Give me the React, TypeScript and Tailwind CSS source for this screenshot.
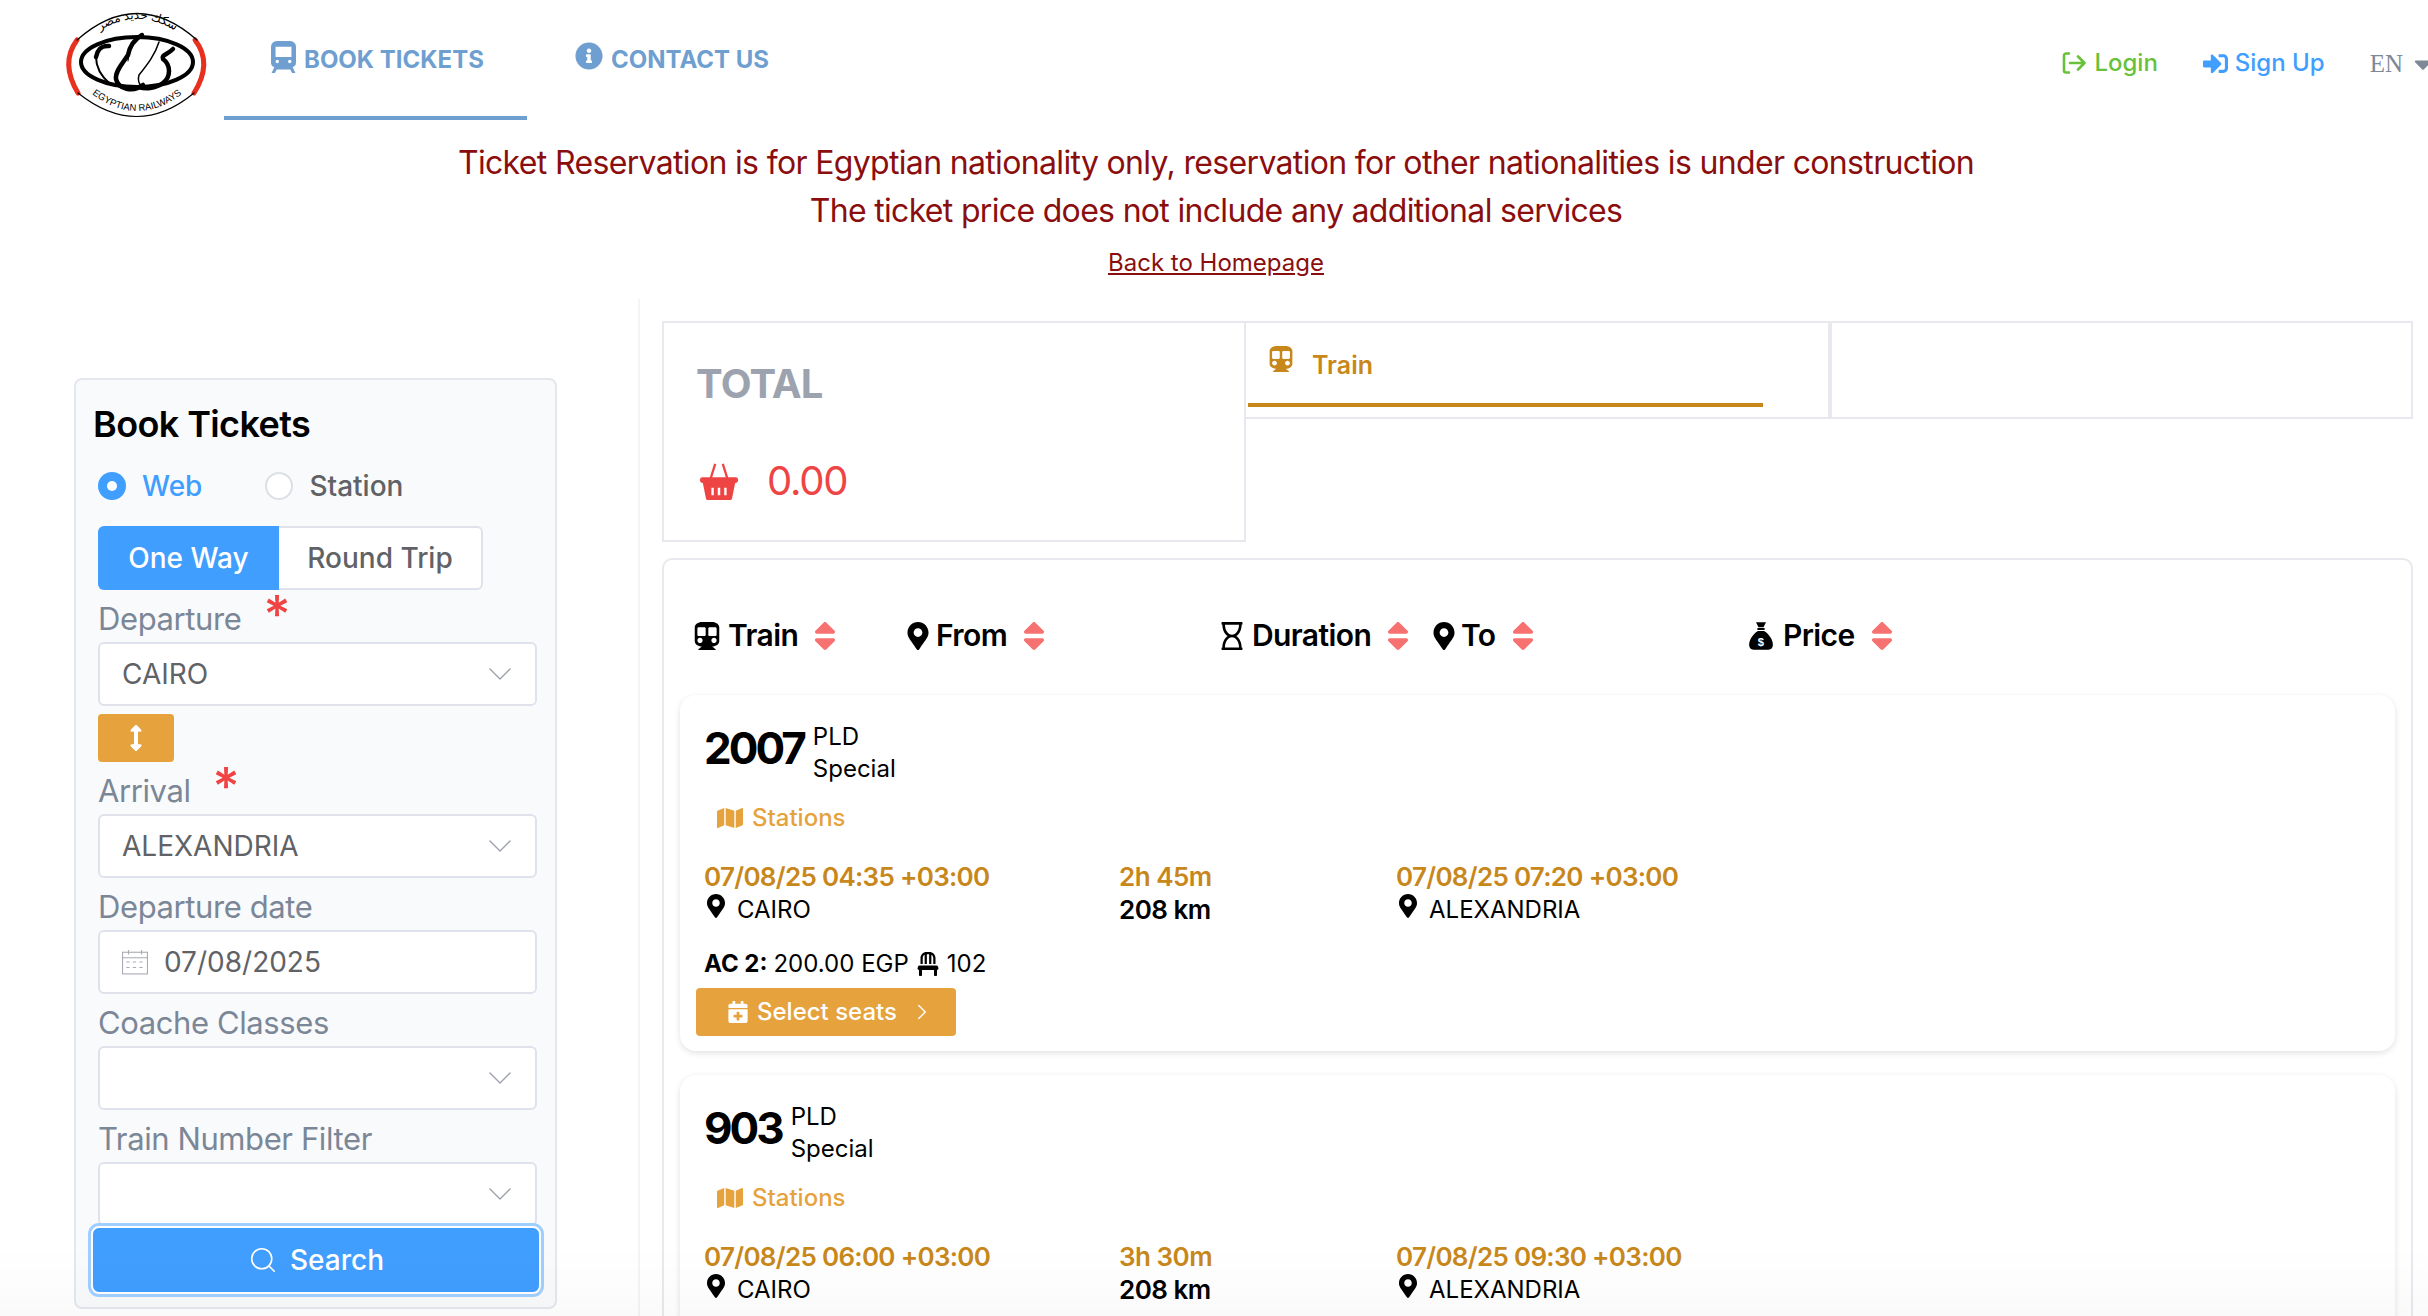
import React from 'react';
import {
  FaCaretDown,
  FaSubway,
  FaInfoCircle,
  FaSignInAlt,
  FaArrowsAltV,
  FaSort,
  FaMapMarkerAlt,
  FaRegHourglass,
  FaMap,
  FaChair,
  FaCalendarPlus,
} from 'react-icons/fa';
import { ChevronDown, ChevronRight, Search } from 'lucide-react';

function Logo() {
  return (
    <svg viewBox="0 0 165 115" className="w-[165px] h-[115px]">
      <defs>
        <path id="logo-top" d="M32 35 Q82 -7 133 35" />
        <path id="logo-bottom" d="M31 84 Q82 128 133 84" />
      </defs>
      <g fill="none" strokeLinecap="round">
        <path d="M22 35 Q5 58 23 88" stroke="#e8301f" strokeWidth="5" />
        <path d="M140 35 Q158 58 139 88" stroke="#e8301f" strokeWidth="5" />
        <path d="M22 35 Q82 -18 142 35" stroke="#000" strokeWidth="1.200" />
        <path d="M23 88 Q82 135 139 88" stroke="#000" strokeWidth="1.200" />
        <ellipse cx="82" cy="57" rx="56" ry="25" stroke="#000" strokeWidth="4" />
        <path d="M54 41 C46 40 42 46 41 52" stroke="#000" strokeWidth="4.500" />
        <path d="M41 52 C41 62 47 72 55 79" stroke="#000" strokeWidth="2" />
        <path d="M87 30 C80 34 75 40 73 50 C68 58 60 66 61 74 C63 84 78 88 88 80" stroke="#000" strokeWidth="4.500" />
        <path d="M74 50 L73 56" stroke="#000" strokeWidth="1" />
        <path d="M104 37 C100 50 92 60 84 70 C82 78 86 82 90 82" stroke="#000" strokeWidth="1.500" />
        <path d="M118 44 C112 50 106 50 108 54 C116 60 116 72 108 78 C100 84 90 84 84 82" stroke="#000" strokeWidth="4.500" />
      </g>
      <text fontSize="12" fontFamily="'Noto Sans', 'DejaVu Sans', sans-serif" fill="#000">
        <textPath href="#logo-top" startOffset="50%" textAnchor="middle">سكك حديد مصر</textPath>
      </text>
      <text fontSize="9.500" fontFamily="'Liberation Sans', sans-serif" fill="#000">
        <textPath href="#logo-bottom" startOffset="50%" textAnchor="middle">EGYPTIAN RAILWAYS</textPath>
      </text>
    </svg>
  );
}

function Basket({ className }: { className?: string }) {
  return (
    <svg viewBox="0 0 40 40" className={className} fill="currentColor">
      <path d="M11 18 L16 2 M29 18 L24 2" stroke="currentColor" strokeWidth="2.400" fill="none" />
      <rect x="0" y="16" width="40" height="6" rx="2.500" />
      <path
        fillRule="evenodd"
        d="M3 22h34l-3 15a3 3 0 0 1-3 3H9a3 3 0 0 1-3-3L3 22zm9 5v8h2.500v-8H12zm6.700 0v8h2.600v-8h-2.600zm6.800 0v8H28v-8h-2.500z"
      />
    </svg>
  );
}

function MoneyBag({ className }: { className?: string }) {
  return (
    <svg viewBox="0 0 24 24" className={className} fill="currentColor">
      <path d="M8 1h8l-2 4h-4L8 1z" />
      <rect x="9" y="5.600" width="6" height="1.600" rx="0.600" />
      <path d="M9.500 8h5c4 2.600 7 7 7 11 0 3-2 4-4.500 4h-10C4.500 23 2.500 22 2.500 19c0-4 3-8.400 7-11z" />
      <text x="12" y="20" fontSize="9" fontWeight="700" textAnchor="middle" fill="#fff" fontFamily="'Liberation Sans', sans-serif">$</text>
    </svg>
  );
}

function TrainOutline({ className }: { className?: string }) {
  return (
    <svg viewBox="0 0 22 28" className={className} fill="currentColor">
      <path fillRule="evenodd" d="M5 0h12a5 5 0 0 1 5 5v14a4 4 0 0 1-3 3.900L21.500 28h-3l-1.500-3H5l-1.500 3h-3L3 22.900A4 4 0 0 1 0 19V5a5 5 0 0 1 5-5zM4 5v9h14V5H4zm1.500 11.500a1.500 1.500 0 1 0 0 3 1.500 1.500 0 0 0 0-3zm11 0a1.500 1.500 0 1 0 0 3 1.500 1.500 0 0 0 0-3z" />
    </svg>
  );
}

function LoginIcon({ className }: { className?: string }) {
  return (
    <svg viewBox="0 0 24 22" className={className} fill="none" stroke="currentColor" strokeWidth="2.600" strokeLinecap="round" strokeLinejoin="round">
      <path d="M7 1.500H4a2 2 0 0 0-2 2v15a2 2 0 0 0 2 2h3" />
      <path d="M8 11h14M16 4.500l6.500 6.500-6.500 6.500" />
    </svg>
  );
}

function FieldLabel({ text, required }: { text: string; required?: boolean }) {
  return (
    <div className="relative h-[36px] flex items-center text-[31px] leading-[36px] tracking-[-0.4px] text-[#7b8797]">
      <span>{text}</span>
      {required && (
        <span className="ml-[22px] -mt-[8px] text-[52px] leading-[36px] font-medium text-[#f04343]">*</span>
      )}
    </div>
  );
}

function SelectBox({ value }: { value?: string }) {
  return (
    <div className="h-[64px] w-[439px] rounded-[6px] border-2 border-[#dfe2ea] bg-white flex items-center justify-between pl-[22px] pr-[15px] text-[28px] text-[#606266]">
      <span>{value}</span>
      <ChevronDown size={40} strokeWidth={0.8} className="text-[#9aa0aa]" />
    </div>
  );
}

function SortHead({ icon, label, width, gap }: { icon: React.ReactNode; label: string; width: string; gap: string }) {
  return (
    <div className={`flex items-center ${width}`}>
      {icon}
      <span className={`${gap} text-[30px] tracking-[-0.6px] font-semibold text-black`}>{label}</span>
      <FaSort className="ml-[9px] text-[36px] text-[#f87171]" />
    </div>
  );
}

function TrainCard({ number, dep, dur, arr }: { number: string; dep: string; dur: string; arr: string }) {
  return (
    <div className="h-[356px] rounded-[16px] bg-white shadow-[0_2px_6px_rgba(0,0,0,0.12)] pl-[24px] pt-[22px] relative">
      <div className="flex items-center h-[62px]">
        <span className="text-[44px] font-bold tracking-[-3px] text-black leading-[62px]">{number}</span>
        <div className="ml-[9px] mt-[10px] text-[24px] leading-[32px] text-black">
          <div>PLD</div>
          <div>Special</div>
        </div>
      </div>
      <div className="mt-[22px] ml-[13px] flex items-center text-[24px] leading-[34px] font-medium text-[#e6a23c]">
        <FaMap className="text-[26px] mr-[9px]" />
        Stations
      </div>
      <div className="mt-[25px] grid grid-cols-[415px_277px_1fr]">
        <div className="text-[26px] leading-[34px] font-semibold tracking-[-0.7px] text-[#c8871a]">{dep}</div>
        <div className="text-[26px] leading-[34px] font-semibold tracking-[-0.5px] text-[#c8871a]">{dur}</div>
        <div className="text-[26px] leading-[34px] font-semibold tracking-[-0.7px] text-[#c8871a]">{arr}</div>
        <div className="flex items-center text-[24px] leading-[32px] text-black">
          <FaMapMarkerAlt className="text-[24px] -mt-[8px] mr-[9px]" />
          CAIRO
        </div>
        <div className="text-[26px] leading-[32px] font-semibold tracking-[-0.5px] text-black">208 km</div>
        <div className="flex items-center text-[24px] leading-[32px] text-black">
          <FaMapMarkerAlt className="text-[24px] -mt-[8px] mr-[9px]" />
          ALEXANDRIA
        </div>
      </div>
      <div className="mt-[22px] flex items-center text-[24px] leading-[32px] text-black">
        <b className="font-bold mr-[6px]">AC 2:</b>
        200.00 EGP
        <FaChair className="mx-[7px] text-[24px]" />
        102
      </div>
      <div className="mt-[8px] -ml-[8px] h-[48px] w-[260px] rounded-[4px] bg-[#e6a23c] flex items-center pl-[31px] text-[24px] font-medium text-white">
        <FaCalendarPlus className="text-[22px] mr-[8px]" />
        Select seats
        <ChevronRight size={26} strokeWidth={1.3} className="ml-[12px]" />
      </div>
    </div>
  );
}

export default function App() {
  return (
    <div className="relative h-[1316px] w-[2428px] overflow-hidden bg-white font-['Inter',sans-serif]">
      {/* Top nav */}
      <header className="flex h-[120px]">
        <div className="pl-[55px] pt-[5px] w-[224px]">
          <Logo />
        </div>
        <div className="w-[303px] h-[120px] border-b-4 border-[#6e9fd0] flex items-start pt-[42px] pl-[47px] text-[#6e9fd0] text-[24px] font-bold">
          <TrainOutline className="w-[25px] h-[32px] mr-[8px] mt-[-1px]" />
          BOOK TICKETS
        </div>
        <div className="flex items-start pt-[42px] pl-[48px] text-[#6e9fd0] text-[24px] font-bold">
          <FaInfoCircle className="text-[28px] mr-[8px]" />
          CONTACT US
        </div>
        <div className="ml-auto flex items-start pt-[45px] text-[24px]">
          <div className="flex items-center text-[#67c23a] font-medium">
            <LoginIcon className="w-[24px] h-[22px] mr-[8px]" />
            Login
          </div>
          <div className="flex items-center ml-[45px] text-[#409eff] font-medium">
            <FaSignInAlt className="text-[25px] mr-[7px]" />
            Sign Up
          </div>
          <div className="flex items-center ml-[45px] -mr-[9px] text-[25px] text-[#7f8896] font-['Liberation_Serif',serif]">
            EN
            <FaCaretDown className="ml-[6px] text-[28px]" />
          </div>
        </div>
      </header>

      {/* Notice */}
      <div className="h-[160px] pl-[4px] text-center text-[#8b0e0e]">
        <p className="mt-[19px] text-[32px] leading-[48px] tracking-[-0.66px]">
          Ticket Reservation is for Egyptian nationality only, reservation for other nationalities is under construction
        </p>
        <p className="text-[32px] leading-[48px] tracking-[-0.68px]">The ticket price does not include any additional services</p>
        <p className="mt-[12px] text-[24px] leading-[32px] underline">Back to Homepage</p>
      </div>

      <div className="flex">
        {/* Search form */}
        <aside className="w-[640px] h-[1036px] border-r-2 border-[#f3f4f6] pl-[74px] pt-[79px]">
          <div className="w-[483px] h-[931px] rounded-[8px] border-2 border-[#e5e7ee] bg-[#f9fafc] pl-[22px] pt-[22px]">
            <h2 className="text-[36px] leading-[48px] font-semibold tracking-[-0.6px] text-black -ml-[5px] -mt-[2px]">Book Tickets</h2>
            <div className="mt-[18px] flex items-center h-[40px] text-[28px]">
              <span className="w-[28px] h-[28px] rounded-full bg-[#409eff] flex items-center justify-center">
                <span className="w-[10px] h-[10px] rounded-full bg-white" />
              </span>
              <span className="ml-[16px] text-[#409eff] font-medium">Web</span>
              <span className="ml-[63px] w-[28px] h-[28px] rounded-full border-2 border-[#dcdfe6] bg-white" />
              <span className="ml-[16px] text-[#606266] font-medium">Station</span>
            </div>
            <div className="mt-[20px] flex h-[64px] w-[385px] text-[28px] font-medium">
              <div className="w-[181px] rounded-l-[6px] bg-[#409eff] text-white flex items-center justify-center">One Way</div>
              <div className="flex-1 rounded-r-[6px] border-2 border-l-0 border-[#dfe2ea] bg-white text-[#606266] flex items-center justify-center">Round Trip</div>
            </div>
            <div className="mt-[11px]">
              <FieldLabel text="Departure" required />
            </div>
            <div className="mt-[5px]">
              <SelectBox value="CAIRO" />
            </div>
            <div className="mt-[8px] w-[76px] h-[48px] rounded-[4px] bg-[#e6a23c] flex items-center justify-center text-white">
              <FaArrowsAltV className="text-[26px]" />
            </div>
            <div className="mt-[11px]">
              <FieldLabel text="Arrival" required />
            </div>
            <div className="mt-[5px]">
              <SelectBox value="ALEXANDRIA" />
            </div>
            <div className="mt-[11px]">
              <FieldLabel text="Departure date" />
            </div>
            <div className="mt-[5px] h-[64px] w-[439px] rounded-[6px] border-2 border-[#dfe2ea] bg-white flex items-center pl-[22px] text-[28px] text-[#606266]">
              <svg viewBox="0 0 24 24" className="w-[26px] h-[26px] mr-[16px]" fill="none" stroke="#a8abb2" strokeWidth="1">
                <rect x="0.500" y="3" width="23" height="20" />
                <path d="M0.500 8h23M6 1v4M18 1v4M4 12h3M10 12h3M16 12h3M4 17h3M10 17h3M16 17h3" />
              </svg>
              07/08/2025
            </div>
            <div className="mt-[11px]">
              <FieldLabel text="Coache Classes" />
            </div>
            <div className="mt-[5px]">
              <SelectBox />
            </div>
            <div className="mt-[11px]">
              <FieldLabel text="Train Number Filter" />
            </div>
            <div className="mt-[5px]">
              <SelectBox />
            </div>
            <div className="-ml-[7px] h-[68px] w-[450px] rounded-[8px] bg-[#409eff] border-2 border-white outline-[3px] outline-[#a0cfff] flex items-center justify-center text-[28px] font-medium text-white">
              <Search size={30} strokeWidth={1.3} className="mr-[12px]" />
              Search
            </div>
          </div>
        </aside>

        {/* Results */}
        <main className="flex-1 pl-[22px] pt-[22px] pr-[15px]">
          <div className="flex h-[221px]">
            <div className="w-[584px] h-[221px] border-2 border-[#e8e8ee] pl-[32px] pt-[36px]">
              <div className="text-[40px] leading-[50px] font-bold tracking-[-0.8px] text-[#9ca3af]">TOTAL</div>
              <div className="mt-[44px] pl-[3px] flex items-center text-[#ef4444]">
                <Basket className="w-[40px] h-[38px]" />
                <span className="ml-[28px] text-[40px] leading-[56px] tracking-[-1.2px]">0.00</span>
              </div>
            </div>
            <div className="flex flex-1 h-[98px] border-y-2 border-r-2 border-[#e8e8ee]">
              <div className="w-[586px] border-r-4 border-[#e8e8ee] pl-[2px] pr-[65px]">
                <div className="h-[84px] pl-[20px] border-b-4 border-[#c8871a] flex items-start pt-[23px] text-[#c8871a] text-[25px] font-semibold">
                  <FaSubway className="text-[26px] mr-[18px]" />
                  <span className="mt-[1px]">Train</span>
                </div>
              </div>
            </div>
          </div>
          <div className="mt-[16px] rounded-t-[10px] border-2 border-b-0 border-[#e8e8ee] h-[800px] px-[16px]">
            <div className="h-[135px] pl-[13px] flex items-center pt-[16px]">
              <SortHead width="w-[211px]" gap="ml-[7px]" icon={<FaSubway className="text-[28px]" />} label="Train" />
              <SortHead width="w-[314px]" gap="ml-[4px]" icon={<FaMapMarkerAlt className="text-[28px]" />} label="From" />
              <SortHead width="w-[212px]" gap="ml-[6px]" icon={<FaRegHourglass className="text-[28px]" />} label="Duration" />
              <SortHead width="w-[316px]" gap="ml-[3px]" icon={<FaMapMarkerAlt className="text-[28px]" />} label="To" />
              <SortHead width="w-[211px]" gap="ml-[7px]" icon={<MoneyBag className="w-[30px] h-[32px]" />} label="Price" />
            </div>
            <div className="flex flex-col gap-[24px]">
              <TrainCard number="2007" dep="07/08/25 04:35 +03:00" dur="2h 45m" arr="07/08/25 07:20 +03:00" />
              <TrainCard number="903" dep="07/08/25 06:00 +03:00" dur="3h 30m" arr="07/08/25 09:30 +03:00" />
            </div>
          </div>
        </main>
      </div>

      {/* faint fade at the bottom of the window */}
      <div className="absolute bottom-0 left-0 right-0 h-[70px] bg-gradient-to-b from-transparent to-black/[0.02] pointer-events-none" />
    </div>
  );
}
